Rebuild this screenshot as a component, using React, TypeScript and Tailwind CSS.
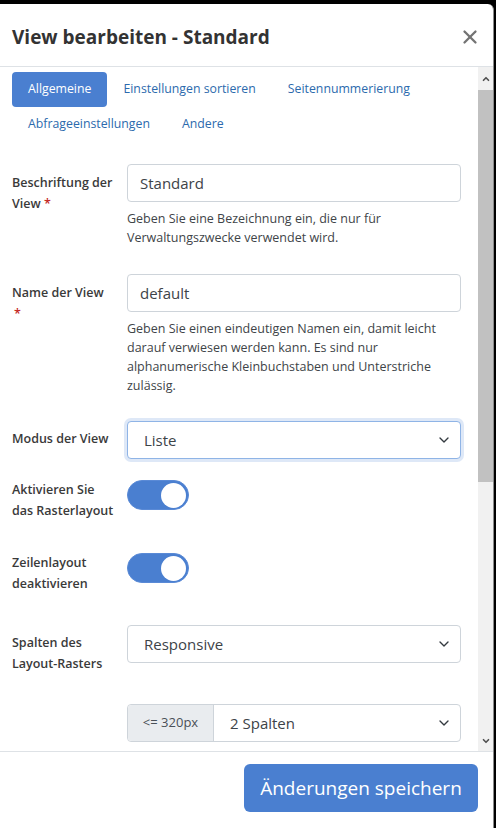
import { ChevronDown, ChevronUp, X } from 'lucide-react';

const tabs = [
  ['Allgemeine', 'Einstellungen sortieren', 'Seitennummerierung'],
  ['Abfrageeinstellungen', 'Andere'],
];

const font = { fontFamily: '"Open Sans", "Noto Sans", sans-serif' };

const SelectBox = ({ value, focused = false }: { value: string; focused?: boolean }) => (
  <div
    className={
      focused
        ? 'flex h-[38px] w-full items-center justify-between rounded-[4px] border border-[#8fb4e6] bg-white pl-[16px] pr-[8px] shadow-[0_0_0_3px_rgba(74,129,212,0.18)]'
        : 'flex h-[38px] w-full items-center justify-between rounded-[4px] border border-[#ced4da] bg-white pl-[16px] pr-[8px]'
    }
  >
    <span className="text-[15px] text-[#3d4348]">{value}</span>
    <ChevronDown className="h-[16px] w-[16px] text-[#343a40]" strokeWidth={2} />
  </div>
);

const TextInput = ({ value }: { value: string }) => (
  <div className="flex h-[38px] w-full items-center rounded-[4px] border border-[#ced4da] bg-white px-[12px]">
    <span className="text-[15px] text-[#3d4348]">{value}</span>
  </div>
);

const Toggle = () => (
  <div className="flex h-[30px] w-[62px] items-center justify-end rounded-full border border-[#5a8ad6] bg-[#4a7fd0] px-[2px]">
    <span className="h-[25px] w-[25px] rounded-full bg-white" />
  </div>
);

type LabelProps = {
  children: React.ReactNode;
  required?: boolean;
  starBelow?: boolean;
  top?: string;
};

const Label = ({ children, required = false, starBelow = false, top = 'pt-[9px]' }: LabelProps) => (
  <div className={`w-[115px] shrink-0 pr-[11px] text-[12.5px] font-semibold leading-[20.5px] text-[#3a3a3a] ${top}`}>
    {children}
    {required && !starBelow && ' '}
    {required && <span className={starBelow ? 'block pl-[2px] text-[#c52827]' : 'text-[#c52827]'}>*</span>}
  </div>
);

const Help = ({ children }: { children: React.ReactNode }) => (
  <p className="mt-[7px] text-[12.5px] leading-[19px] text-[#404448]">{children}</p>
);

const App = () => {
  return (
    <div className="h-[828px] w-[496px] overflow-hidden bg-black pt-[4px]" style={font}>
      <div className="flex h-[824px] w-[494px] flex-col rounded-tr-[6px] border-r border-[#8a8a8a] bg-white">
        <header className="flex h-[63px] shrink-0 items-center justify-between border-b border-[#dee2e6] pl-[12px] pr-[12px] pt-[4px]">
          <h1 className="text-[19px] font-bold text-[#333]">View bearbeiten - Standard</h1>
          <X className="h-[22px] w-[22px] text-[#737373]" strokeWidth={2.5} />
        </header>

        <div className="flex h-[684px] shrink-0">
          <div className="flex-1 overflow-hidden pl-[12px] pr-[17px] pt-[5px]">
            <nav className="flex flex-col">
              {tabs.map((row, i) => (
                <div key={i} className="flex">
                  {row.map((t) => (
                    <span
                      key={t}
                      className={
                        t === 'Allgemeine'
                          ? 'flex h-[35px] items-center rounded-[4px] bg-[#4a7fd0] px-[16px] text-[12.3px] text-white'
                          : 'flex h-[35px] items-center px-[16px] text-[12.3px] text-[#2c6aad]'
                      }
                    >
                      {t}
                    </span>
                  ))}
                </div>
              ))}
            </nav>

            <div className="mt-[22px] flex">
              <Label required>Beschriftung der View</Label>
              <div className="flex-1">
                <TextInput value="Standard" />
                <Help>Geben Sie eine Bezeichnung ein, die nur für Verwaltungszwecke verwendet wird.</Help>
              </div>
            </div>

            <div className="mt-[27px] flex">
              <Label required starBelow>
                Name der View
              </Label>
              <div className="flex-1">
                <TextInput value="default" />
                <Help>
                  Geben Sie einen eindeutigen Namen ein, damit leicht darauf verwiesen werden kann. Es sind nur
                  alphanumerische Kleinbuchstaben und Unterstriche zulässig.
                </Help>
              </div>
            </div>

            <div className="mt-[26px] flex">
              <Label top="pt-[8px]">Modus der View</Label>
              <div className="flex-1">
                <SelectBox value="Liste" focused />
              </div>
            </div>

            <div className="mt-[21px] flex">
              <Label top="pt-0">Aktivieren Sie das Rasterlayout</Label>
              <Toggle />
            </div>

            <div className="mt-[32px] flex">
              <Label top="pt-0">Zeilenlayout deaktivieren</Label>
              <Toggle />
            </div>

            <div className="mt-[31px] flex">
              <Label top="pt-[8px]">Spalten des Layout-Rasters</Label>
              <div className="flex-1">
                <SelectBox value="Responsive" />
              </div>
            </div>

            <div className="mt-[30px] flex">
              <div className="w-[115px] shrink-0" />
              <div className="flex h-[38px] flex-1 rounded-[4px] border border-[#ced4da]">
                <span className="flex w-[86px] items-center justify-center rounded-l-[4px] border-r border-[#ced4da] bg-[#e9ecef] text-[13px] text-[#495057]">
                  &lt;= 320px
                </span>
                <div className="flex flex-1 items-center justify-between pl-[16px] pr-[8px]">
                  <span className="text-[15px] text-[#3d4348]">2 Spalten</span>
                  <ChevronDown className="h-[16px] w-[16px] text-[#343a40]" strokeWidth={2} />
                </div>
              </div>
            </div>
          </div>

          {/* scrollbar */}
          <div className="flex w-[15px] shrink-0 flex-col bg-[#f1f1f1]">
            <div className="flex h-[23px] items-center justify-center">
              <ChevronUp className="h-[10px] w-[10px] text-[#505050]" strokeWidth={4} />
            </div>
            <div className="h-[392px] bg-[#c1c1c1]" />
            <div className="flex-1" />
            <div className="flex h-[20px] items-center justify-center">
              <ChevronDown className="h-[10px] w-[10px] text-[#505050]" strokeWidth={4} />
            </div>
          </div>
        </div>

        <footer className="flex flex-1 justify-end border-t border-[#dee2e6] pr-[15px] pt-[12px]">
          <button className="h-[48px] w-[234px] rounded-[6px] bg-[#4a7fd0] text-[19px] text-white">
            Änderungen speichern
          </button>
        </footer>
      </div>
    </div>
  );
};

export default App;
